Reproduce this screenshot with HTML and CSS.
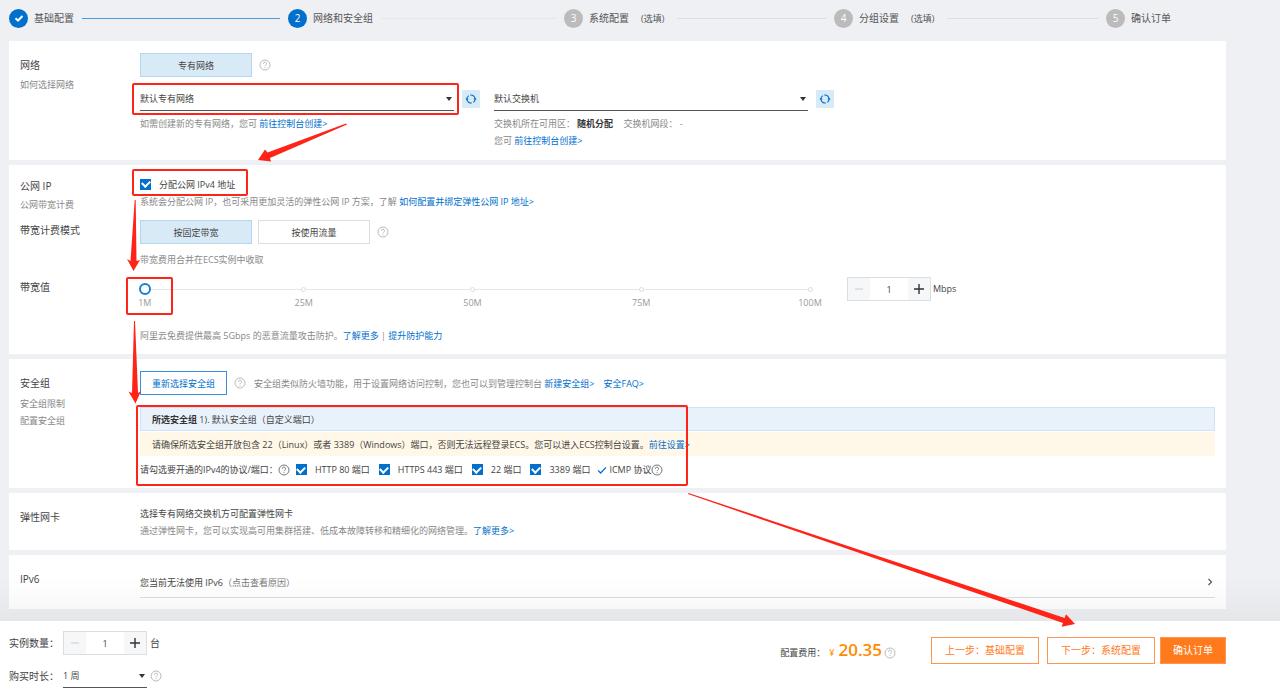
FILE: index.html
```html
<!DOCTYPE html>
<html lang="zh-CN">
<head>
<meta charset="utf-8">
<title>网络和安全组</title>
<link rel="stylesheet" href="styles.css">
</head>
<body>
<svg class="defs" width="0" height="0" aria-hidden="true">
  <symbol id="help" viewBox="0 0 12 12"><circle cx="6" cy="6" r="5" fill="none" stroke="currentColor"/><path d="M4.4 4.8a1.6 1.6 0 1 1 2.3 1.4Q6 6.6 6 7.2M6 8.2v1" fill="none" stroke="currentColor"/></symbol>
  <symbol id="sync" viewBox="0 0 12 12"><path d="M1.900 6.500A4.100 4.100 0 0 1 3.700 2.600M5.200 2A4.100 4.100 0 0 1 10 5.500M10.100 5.500A4.100 4.100 0 0 1 8.300 9.400M6.800 10A4.100 4.100 0 0 1 2 6.500" fill="none" stroke="currentColor" stroke-width="1.100"/><path d="M.4 5.400h3.200L2 7.400zM8.500 6.600h3.200L10 4.600z" fill="currentColor"/></symbol>
  <symbol id="tick" viewBox="0 0 10 10"><path d="M1 5.400 3.600 8 9 2.400" fill="none" stroke="currentColor" stroke-width="1.300"/></symbol>
  <symbol id="bold-tick" viewBox="0 0 10 10"><path d="M1.500 5.200 4 7.500 8.500 3" fill="none" stroke="currentColor" stroke-width="2"/></symbol>
  <symbol id="minus" viewBox="0 0 10 10"><path d="M1 5h8" stroke="currentColor"/></symbol>
  <symbol id="plus" viewBox="0 0 10 10"><path d="M0 5h10M5 0v10" stroke="currentColor" stroke-width="1.400"/></symbol>
</svg>

<ol class="steps">
  <li class="step done"><span class="dot"><svg class="i10"><use href="#bold-tick"/></svg></span><span>基础配置</span><i class="line"></i></li>
  <li class="step current"><span class="dot">2</span><span>网络和安全组</span><i class="line"></i></li>
  <li class="step"><span class="dot">3</span><span>系统配置</span><small>(选填)</small><i class="line"></i></li>
  <li class="step"><span class="dot">4</span><span>分组设置</span><small>(选填)</small><i class="line"></i></li>
  <li class="step"><span class="dot">5</span><span>确认订单</span></li>
</ol>

<main class="cards">
  <section class="card">
    <div class="row">
      <div class="side"><h2>网络</h2><a class="sub" href="#">如何选择网络</a></div>
      <div>
        <div class="inline">
          <button class="choice on" type="button">专有网络</button>
          <svg class="help"><use href="#help"/></svg>
        </div>
        <div class="nets">
          <div class="net">
            <div class="pick">
              <span class="select"><select aria-label="专有网络"><option>默认专有网络</option></select></span>
              <button class="sync" type="button" aria-label="刷新专有网络"><svg><use href="#sync"/></svg></button>
            </div>
            <p>如需创建新的专有网络，您可 <a href="#">前往控制台创建&gt;</a></p>
          </div>
          <div class="net">
            <div class="pick">
              <span class="select"><select aria-label="交换机"><option>默认交换机</option></select></span>
              <button class="sync" type="button" aria-label="刷新交换机"><svg><use href="#sync"/></svg></button>
            </div>
            <p><span>交换机所在可用区：</span><b>随机分配</b> <span class="seg">交换机网段： -</span></p>
            <p>您可 <a href="#">前往控制台创建&gt;</a></p>
          </div>
        </div>
      </div>
    </div>
  </section>

  <section class="card public">
    <div class="row">
      <div class="side"><h2>公网 IP</h2><a class="sub" href="#">公网带宽计费</a></div>
      <div>
        <label class="check"><input type="checkbox" checked><span>分配公网 IPv4 地址</span></label>
        <p>系统会分配公网 IP，也可采用更加灵活的弹性公网 IP 方案，了解 <a href="#">如何配置并绑定弹性公网 IP 地址&gt;</a></p>
      </div>
    </div>
    <div class="row mode">
      <div class="side"><h2>带宽计费模式</h2></div>
      <div>
        <div class="inline">
          <button class="choice on" type="button">按固定带宽</button>
          <button class="choice" type="button">按使用流量</button>
          <svg class="help"><use href="#help"/></svg>
        </div>
        <p class="after">带宽费用合并在ECS实例中收取</p>
      </div>
    </div>
    <div class="row band">
      <div class="side"><h2>带宽值</h2></div>
      <div>
        <div class="speed">
          <div class="slider">
            <ul class="marks">
              <li class="first" style="left:1%"><i></i>1M</li>
              <li style="left:25%"><i></i>25M</li>
              <li style="left:50%"><i></i>50M</li>
              <li style="left:75%"><i></i>75M</li>
              <li style="left:100%"><i></i>100M</li>
            </ul>
            <input type="range" min="1" max="100" value="1" aria-label="带宽值">
          </div>
          <div class="stepper">
            <button type="button" aria-label="减少带宽" disabled><svg class="i10"><use href="#minus"/></svg></button>
            <input type="text" value="1" aria-label="带宽数值">
            <button type="button" aria-label="增加带宽"><svg class="i10"><use href="#plus"/></svg></button>
          </div>
          <span class="unit">Mbps</span>
        </div>
        <p class="shield">阿里云免费提供最高 5Gbps 的恶意流量攻击防护。<a href="#">了解更多</a> | <a href="#">提升防护能力</a></p>
      </div>
    </div>
  </section>

  <section class="card secure">
    <div class="row">
      <div class="side group"><h2>安全组</h2><a class="sub" href="#">安全组限制</a><a class="sub" href="#">配置安全组</a></div>
      <div>
        <div class="inline">
          <button class="reselect" type="button">重新选择安全组</button>
          <svg class="help"><use href="#help"/></svg>
          <p>安全组类似防火墙功能，用于设置网络访问控制，您也可以到管理控制台 <a href="#">新建安全组&gt;</a><a class="faq" href="#">安全FAQ&gt;</a></p>
        </div>
        <div class="strip info"><b>所选安全组</b>&nbsp;1). 默认安全组（自定义端口）</div>
        <div class="strip warn">请确保所选安全组开放包含 22（Linux）或者 3389（Windows）端口，否则无法远程登录ECS。您可以进入ECS控制台设置。<a href="#">前往设置&gt;</a></div>
        <div class="ports">
          <span>请勾选要开通的IPv4的协议/端口：</span><svg class="help dark"><use href="#help"/></svg>
          <label class="check"><input type="checkbox" checked><span>HTTP 80 端口</span></label>
          <label class="check"><input type="checkbox" checked><span>HTTPS 443 端口</span></label>
          <label class="check"><input type="checkbox" checked><span>22 端口</span></label>
          <label class="check"><input type="checkbox" checked><span>3389 端口</span></label>
          <span class="icmp"><svg class="i10"><use href="#tick"/></svg>ICMP 协议</span><svg class="help dark"><use href="#help"/></svg>
        </div>
      </div>
    </div>
  </section>

  <section class="card">
    <div class="row">
      <div class="side"><h2>弹性网卡</h2></div>
      <div>
        <p class="strong">选择专有网络交换机方可配置弹性网卡</p>
        <p>通过弹性网卡，您可以实现高可用集群搭建、低成本故障转移和精细化的网络管理。<a href="#">了解更多&gt;</a></p>
      </div>
    </div>
  </section>

  <section class="card">
    <div class="row">
      <div class="side"><h2>IPv6</h2></div>
      <button class="expand" type="button"><span>您当前无法使用 IPv6</span><small>（点击查看原因）</small>
        <svg class="chev" viewBox="0 0 10 10"><path d="M3.500 2 6.500 5 3.500 8" fill="none" stroke="currentColor" stroke-width="1.200"/></svg></button>
    </div>
  </section>
</main>

<footer class="bar">
  <div class="order">
    <div class="field"><label for="count">实例数量：</label>
      <div class="stepper">
        <button type="button" aria-label="减少数量" disabled><svg class="i10"><use href="#minus"/></svg></button>
        <input id="count" type="text" value="1">
        <button type="button" aria-label="增加数量"><svg class="i10"><use href="#plus"/></svg></button>
      </div>
      <span class="tail">台</span></div>
    <div class="field"><label for="term">购买时长：</label>
      <span class="select term"><select id="term"><option>1 周</option></select></span>
      <svg class="help tail"><use href="#help"/></svg></div>
  </div>
  <div class="price"><span>配置费用：</span><span class="yen">¥</span><strong>20.35</strong><svg class="help"><use href="#help"/></svg></div>
  <div class="actions">
    <button type="button">上一步：基础配置</button>
    <button type="button">下一步：系统配置</button>
    <button class="primary" type="button">确认订单</button>
  </div>
</footer>

<svg class="guide" width="1280" height="694" viewBox="0 0 1280 694" aria-hidden="true">
  <g fill="none" stroke="#ff2418" stroke-width="2">
    <rect x="133" y="84" width="325" height="30" rx="1"/>
    <rect x="133" y="170" width="114" height="25" rx="1"/>
    <rect x="127" y="278" width="45" height="36" rx="1"/>
    <rect x="137" y="406" width="550" height="79" rx="1"/>
  </g>
  <g fill="#ff2418">
    <path d="M346 123.500 L267.500 152.500 L265 149.500 L258 160 L271 161.500 L270 158 L347 124.500Z"/>
    <path d="M134.700 200 L130.500 261 L127 259 L133.500 271 L140 260 L136.500 261 L135.700 200Z"/>
    <path d="M134 321 L132 393 L128.500 391.500 L135.500 403.500 L141 391 L138 393 L135 321Z"/>
    <path d="M688.500 493 L1064.700 618 L1066 614.300 L1075 624 L1061.700 626.700 L1063 623 L688 494Z"/>
  </g>
</svg>
</body>
</html>
```
FILE: styles.css
```css
* { box-sizing: border-box; }
body {
  margin: 0;
  min-height: 100vh;
  display: flex;
  flex-direction: column;
  position: relative;
  background: #eff0f4;
  color: #444;
  font: 9px/17px "Open Sans", "Noto Sans CJK SC", sans-serif;
}
h2, p, ol, ul { margin: 0; padding: 0; font-weight: 400; }
li { list-style: none; }
button, input, select { font: inherit; color: inherit; margin: 0; padding: 0; border: 0; border-radius: 0; background: none; }
a { color: #0070cc; text-decoration: none; }
svg { flex: none; }
.defs { position: absolute; }
.i10 { width: 10px; height: 10px; }
.help { width: 12px; height: 12px; color: #bbb; }
.help.dark { color: #777; }

.steps {
  display: grid;
  grid-template-columns: 279fr 276fr 270fr 272fr 120fr;
  height: 41px;
  padding: 0 54px 5px 9px;
  font-size: 10px;
}
.step { display: flex; align-items: center; color: #555; }
.dot {
  display: flex; align-items: center; justify-content: center;
  width: 19px; height: 19px; margin-right: 6px;
  border-radius: 50%; background: #bbb; color: #fff;
}
.done .dot, .current .dot { background: #0070cc; }
.step small { font-size: 9px; margin: 0 5px 0 12px; }
.line { flex: 1; height: 1px; margin: 0 8px; background: #dddee2; }
.done .line { background: #4a9bdc; }
.current .line { background: #e6e7ea; }

.cards { display: grid; gap: 5px; padding: 0 54px 12px 9px; }
.card { background: #fff; padding: 12px 11px 11px; }
.card.public { padding: 9px 11px 10px; }
.card.secure { padding-bottom: 10px; }
.row { display: grid; grid-template-columns: 120px 1fr; }
.side h2 { font-size: 10px; line-height: 24px; }
.side .sub { display: block; color: #888; line-height: 16px; }
.public .sub { line-height: 14px; }
.side.group .sub { line-height: 17px; }
.row p { color: #888; }
.row p.strong { color: #444; }
.row b { color: #333; }
.inline { display: flex; align-items: center; }
.choice { width: 112px; height: 24px; margin-right: 6px; border: 1px solid #ddd; background: #fff; }
.choice.on { background: #d9eaf7; border-color: #b5d7f0; }
.inline .help { margin: 0 8px 0 1px; }

.nets { display: flex; gap: 14px; margin-top: 10px; }
.net { flex: 0 1 340px; }
.pick { display: flex; align-items: center; gap: 8px; margin-bottom: 4px; }
.select { position: relative; flex: 1; height: 24px; border-bottom: 1px solid #555; }
.select select { appearance: none; width: 100%; height: 23px; outline: 0; }
.select::after {
  content: ""; position: absolute; right: 2px; top: 10px;
  border: 3px solid transparent; border-top: 4px solid #333; border-bottom: 0;
  pointer-events: none;
}
.sync { display: grid; place-items: center; width: 18px; height: 18px; background: #d9eaf7; color: #0070cc; border-radius: 1px; }
.sync svg { width: 12px; height: 12px; }
.net b { margin: 0 8px 0 2px; }

.check { display: inline-flex; align-items: center; gap: 8px; }
.check input {
  appearance: none; display: grid; place-items: center;
  width: 11px; height: 11px; background: #0070cc;
}
.check input:checked::before {
  content: ""; width: 6px; height: 4px; margin-bottom: 2px;
  border: solid #fff; border-width: 0 0 2px 2px; transform: rotate(-45deg);
}

.mode { margin-top: 8px; }
.mode h2 { line-height: 20px; }
.after { margin-top: 7px; }
.band { margin-top: 9px; }
.band h2 { line-height: 20px; }
.speed { display: flex; align-items: flex-start; }
.slider { position: relative; width: 677px; height: 34px; margin-left: -1px; }
.slider input { appearance: none; position: relative; display: block; width: 100%; height: 24px; }
.slider input::-webkit-slider-thumb {
  appearance: none; width: 12px; height: 12px;
  border: 2px solid #1a7fd2; border-radius: 50%; background: #fff;
}
.marks { position: absolute; top: 12px; left: -4px; right: 6px; height: 1px; background: linear-gradient(90deg, transparent 10px, #e6e6e6 10px); }
.marks li { position: absolute; top: -2px; width: 30px; margin-left: -15px; text-align: center; color: #999; }
.marks i { display: block; width: 5px; height: 5px; margin: 0 auto 2px; border: 1px solid #ddd; border-radius: 50%; background: #fff; }
.marks .first { margin-left: -12px; }
.stepper { display: flex; width: 84px; height: 24px; border: 1px solid #dedede; background: #fff; }
.stepper button { display: grid; place-items: center; width: 22px; background: #f6f7f9; color: #333; }
.stepper button:disabled { color: #ccc; }
.stepper input { flex: 1; min-width: 0; text-align: center; outline: 0; }
.speed .stepper { margin-left: 31px; }
.unit { line-height: 24px; margin-left: 2px; }
.shield { margin-top: 16px; }

.reselect { width: 87px; height: 24px; margin-right: 6px; border: 1px solid #3a90d8; color: #0070cc; }
.faq { margin-left: 9px; }
.strip { display: flex; align-items: center; min-height: 24px; padding: 0 12px; margin-top: 1px; }
.info { margin-top: 12px; background: #e9f2fb; border: 1px solid #cfe3f4; padding: 0 11px; }
.warn { background: #fff8e8; }
.ports { display: flex; align-items: center; margin-top: 5px; }
.ports .help { margin: 0 6px 0 0; }
.ports .check { margin-right: 9px; }
.icmp { display: flex; align-items: center; gap: 2px; margin-left: -2px; }
.icmp svg { color: #0070cc; }

.expand { display: flex; align-items: center; height: 31px; border-bottom: 1px solid #ddd; text-align: left; }
.expand small { font-size: 9px; color: #777; }
.chev { width: 10px; height: 10px; margin-left: auto; color: #555; }

.bar { position: relative; flex: 1; display: flex; align-items: flex-start; padding: 10px 54px 5px 9px; background: #fff; }
.bar::before {
  content: ""; position: absolute; left: 0; right: 0; bottom: 100%; height: 45px;
  background: linear-gradient(transparent, rgba(0, 0, 0, .04)); pointer-events: none;
}
.order { display: grid; gap: 9px; font-size: 10px; }
.field { display: flex; align-items: center; }
.field label { width: 54px; }
.field .stepper, .term { font-size: 9px; }
.term { flex: none; width: 84px; }
.tail { margin-left: 3px; }
.price { display: flex; align-items: baseline; margin: 9px 35px 0 auto; }
.yen { margin: 0 4px; color: #ff8a00; }
.price strong { font-size: 17px; line-height: 20px; font-weight: 600; color: #ff8a00; }
.price .help { align-self: center; margin: 4px 0 0 2px; }
.actions { display: flex; margin-top: 6px; font-size: 10px; }
.actions button { width: 108px; height: 27px; margin-right: 8px; border: 1px solid #ff9450; color: #ff7a1c; }
.actions .primary { width: 66px; margin: 0 0 0 -3px; background: #ff7a1c; color: #fff; }
.guide { position: absolute; top: 0; left: 0; pointer-events: none; }
```
